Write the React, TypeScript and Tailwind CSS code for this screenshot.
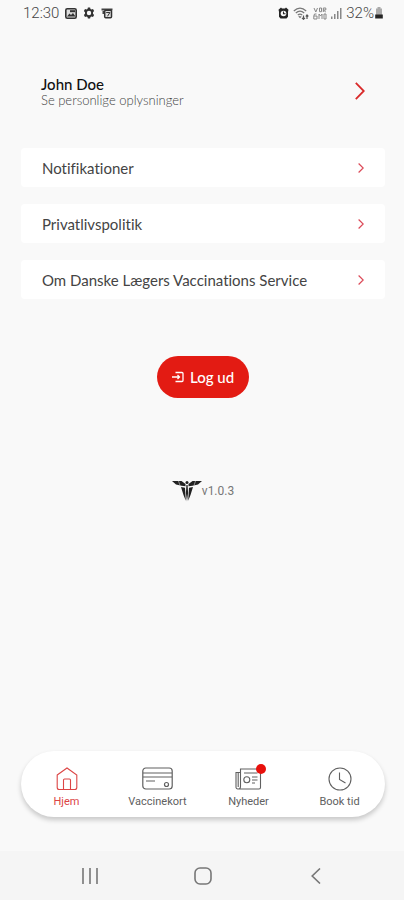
import React from "react";

const RED = "#d92a2a";

function Chevron({ large = false }: { large?: boolean }) {
  return large ? (
    <svg width="10" height="18" viewBox="0 0 10 18" fill="none" stroke={RED} strokeWidth="1.8" aria-hidden="true">
      <path d="M0.8 0.8 8.8 9 0.8 17.2" />
    </svg>
  ) : (
    <svg width="6" height="10" viewBox="0 0 6 10" fill="none" stroke="#dc4a58" strokeWidth="1.2" aria-hidden="true">
      <path d="M0.6 0.5 5.2 5 0.6 9.5" />
    </svg>
  );
}

function StatusBar() {
  return (
    <header className="flex h-[26px] items-center justify-between pl-[23px] pr-5 font-['Roboto',sans-serif] text-[15px] leading-5 text-[#666]">
      <div className="flex items-center gap-[6px]">
        <span className="font-light text-[#444]">12:30</span>
        <svg width="12" height="11" viewBox="0 0 12 11" aria-label="Billede">
          <rect x="0.8" y="0.8" width="10.4" height="9.4" rx="1.5" fill="#ddd" stroke="#333" strokeWidth="1.6" />
          <path d="M2 8.5 4.5 5.5 6 7 8 5l2.5 3.5z" fill="#333" />
          <path d="M5 2.2h5v2H5z" fill="#333" />
        </svg>
        <svg width="12" height="12" viewBox="0 0 12 12" aria-label="Indstillinger">
          <path d="M4.9 0.5h2.2l.4 1.5 1 .6 1.5-.5 1.1 1.9L10 5.2v1.6l1.1 1.2L10 9.9l-1.5-.5-1 .6-.4 1.5H4.9L4.5 10l-1-.6-1.5.5L.9 8 2 6.8V5.2L.9 4 2 2.1l1.5.5 1-.6z" fill="#333" />
          <circle cx="6" cy="6" r="2.2" fill="#fafafa" />
        </svg>
        <svg width="12" height="11" viewBox="0 0 12 11" aria-label="Kalender">
          <path d="M0.5 0.5h11v2h-11zM1.5 3h2v3h-2z" fill="#444" />
          <rect x="3.7" y="2.2" width="6.8" height="7.6" rx="1" fill="#ddd" stroke="#333" strokeWidth="1.5" />
          <path d="M5.2 4.5h3.7L6.5 8.3" fill="none" stroke="#333" />
        </svg>
      </div>
      <div className="flex items-center gap-1">
        <svg width="11" height="12" viewBox="0 0 11 12" aria-label="Alarm">
          <path d="M0.5 2.7 3 .5l1 1h3l1-1 2.5 2.2-.5 2v5L8.5 11.5h-6L1 9.7v-5z" fill="#252525" />
          <circle cx="5.5" cy="6.5" r="2.8" fill="#fafafa" />
          <path d="M5.5 4.5v2.2h2" fill="none" stroke="#252525" strokeWidth="1.1" />
        </svg>
        <svg width="16" height="13" viewBox="0 0 16 13" fill="none" stroke="#777" strokeWidth="1.2" aria-label="Wi-Fi">
          <path d="M0.8 4Q7 -1.8 13.2 4M2.8 6Q7 2.3 11.2 6M4.8 8Q7 6.2 9.2 8M5.8 9.2 7 10.5l1.2-1.2" />
          <path d="M10.5 8.5v3.5M9 10.8l1.5 1.5 1.5-1.5M14 12V8M12.8 9.5 14 8l1.3 1.5" stroke="#555" />
        </svg>
        <svg width="14" height="13" viewBox="0 0 14 13" fill="none" stroke="#888" strokeWidth="1" aria-label="VoLTE">
          <path d="M1 1l1.8 4L4.5 1M6.5 1h2v3.7h-2zM10.3 5V1h2.5v2h-2.5l2.5 2M3.5 7h-2L.8 9v3H4V9H1M6 12V7l1.5 2L9 7v5M11 12V7h2v5z" />
        </svg>
        <svg width="11" height="12" viewBox="0 0 11 12" fill="#888" aria-label="Signal">
          <path d="M0 9.5h1.5V12H0zM3 7h1.5v5H3zM6 4h1.5v8H6zM9 1h1.5v11H9z" />
        </svg>
        <div className="flex items-center">
          <span className="font-light text-[#444]">32%</span>
          <svg width="10" height="12" viewBox="0 0 10 12" aria-label="Batteri">
            <path d="M3.5 0h3v1.500H8V8H2V1.500h1.500z" fill="#aaa" />
            <path d="M1.200 7.500h7.600v4H1.200z" fill="#252525" />
          </svg>
        </div>
      </div>
    </header>
  );
}

const settings = ["Notifikationer", "Privatlivspolitik", "Om Danske Lægers Vaccinations Service"];

const tabs = [
  {
    label: "Hjem",
    active: true,
    icon: (
      <svg width="22" height="24" viewBox="0 0 22 24" fill="none" stroke="currentColor" strokeWidth="1.1">
        <path d="M1.2 8 11 1l9.800 7V20.500a2 2 0 0 1-2 2H3.200a2 2 0 0 1-2-2zM7.500 22.500V13a1 1 0 0 1 1-1h5a1 1 0 0 1 1 1v9.500" />
      </svg>
    ),
  },
  {
    label: "Vaccinekort",
    icon: (
      <svg width="31" height="24" viewBox="0 0 31 24" fill="none" stroke="currentColor" strokeWidth="1.2">
        <rect x="0.8" y="1" width="29.4" height="21" rx="3" />
        <path d="M1 6h29M1 10h29M4 14h9" />
        <circle cx="24.5" cy="17.5" r="2" />
      </svg>
    ),
  },
  {
    label: "Nyheder",
    badge: true,
    icon: (
      <svg width="27" height="24" viewBox="0 0 27 24" fill="none" stroke="currentColor" strokeWidth="1.1">
        <path d="M5.500 19.500V2h20v18.500A1.500 1.500 0 0 1 24 22H3a1.800 1.800 0 0 1-2-2V5.500h4.500M3.200 5.500V20M5.500 19.500c0 1.600-.500 2.500-2 2.500M9 6h13.500M17 10h5.500M17 13h5.500M17 16h3" />
        <circle cx="11.8" cy="12.8" r="3" />
      </svg>
    ),
  },
  {
    label: "Book tid",
    icon: (
      <svg width="24" height="24" viewBox="0 0 24 24" fill="none" stroke="currentColor" strokeWidth="1.1">
        <circle cx="12" cy="12" r="11" />
        <path d="M11.5 5.500v7l6 3.500" />
      </svg>
    ),
  },
];

export default function App() {
  return (
    <div className="flex min-h-screen flex-col bg-[#f9f9f9] font-['Lato',sans-serif] text-[#444]">
      <StatusBar />
      <main className="flex flex-1 flex-col pl-[21px] pr-[19px] pt-10">
        <button type="button" className="flex h-[50px] items-center justify-between px-5 text-left">
          <span className="flex flex-col pt-px">
            <span className="text-[15px] font-medium leading-[17px] text-[#111]">John Doe</span>
            <span className="text-[13px] font-light leading-[15px] text-[#444]">Se personlige oplysninger</span>
          </span>
          <Chevron large />
        </button>
        <ul className="mt-8 flex flex-col gap-[17px]">
          {settings.map((label) => (
            <li key={label}>
              <button type="button" className="flex h-[39px] w-full items-center justify-between rounded-[4px] bg-white px-[21px] text-[15px] leading-5 [font-variant-ligatures:none]">
                <span>{label}</span>
                <Chevron />
              </button>
            </li>
          ))}
        </ul>
        <button type="button" className="mt-[57px] flex h-[42px] items-center gap-[6px] self-center rounded-full bg-[#e31b13] px-[15px] text-[15px] font-medium leading-5 text-white">
          <svg width="12" height="12" viewBox="0 0 12 12" fill="none" stroke="currentColor" strokeWidth="1.3" aria-hidden="true">
            <path d="M3.500 1.500H10a1 1 0 0 1 1 1v7a1 1 0 0 1-1 1H3.500M0 6h7.500M5.500 4 7.500 6l-2 2" />
          </svg>
          Log ud
        </button>
        <div className="mt-[81px] flex items-center justify-center font-['Roboto',sans-serif] text-[12px] leading-6 text-[#777]">
          <svg width="30" height="22" viewBox="0 0 30 22" fill="#222" aria-label="Danske Lægers Vaccinations Service">
            <path d="M0 1h9.500l4 3v2.200L9.500 5.800 4 4.500zM30 1h-9.500l-4 3v2.200l4-.4L26 4.500z" />
            <circle cx="15" cy="2.500" r="1.500" />
            <path d="M9 7l4 .800.800 13L11.500 15zM21 7l-4 .800-.8 13 2.300-5.800zM14.400 5h1.200l.500 8L15 21.500 13.900 13z" />
            <path d="M6.500 1 8 5.500" stroke="#f9f9f9" strokeWidth="0.500" />
            <path d="M23.500 1 22 5.500" stroke="#f9f9f9" strokeWidth="0.500" />
          </svg>
          <span>v1.0.3</span>
        </div>
      </main>
      <nav aria-label="Hovedmenu" className="mb-[34px] ml-[21px] mr-[19px] grid h-[66px] grid-cols-4 rounded-full bg-white font-['Roboto',sans-serif] shadow-[0_3px_5px_rgba(0,0,0,0.2)]">
        {tabs.map(({ label, active, badge, icon }) => (
          <button
            key={label}
            type="button"
            aria-current={active ? "page" : undefined}
            className={`flex flex-col items-center justify-center gap-1 pt-2 text-[11px] leading-[14px] ${active ? "text-[#dc4545]" : "text-[#606060]"}`}
          >
            <span className="relative block">
              <span className="block">{icon}</span>
              {badge && <span className="absolute -right-1 -top-[3px] size-[10px] rounded-full bg-[#e8100c]" />}
            </span>
            {label}
          </button>
        ))}
      </nav>
      <footer className="grid h-[49px] grid-cols-3 items-center bg-[#f5f5f5] pl-[34px] pr-8 text-[#777]">
        <button type="button" aria-label="Seneste apps" className="justify-self-center">
          <svg width="16" height="16" viewBox="0 0 16 16" fill="none" stroke="currentColor" strokeWidth="1.6">
            <path d="M1 0v16M8 0v16M15 0v16" />
          </svg>
        </button>
        <button type="button" aria-label="Startskærm" className="justify-self-center">
          <svg width="18" height="18" viewBox="0 0 18 18" fill="none" stroke="currentColor" strokeWidth="1.6">
            <rect x="1" y="1" width="16" height="16" rx="5" />
          </svg>
        </button>
        <button type="button" aria-label="Tilbage" className="justify-self-center">
          <svg width="10" height="16" viewBox="0 0 10 16" fill="none" stroke="currentColor" strokeWidth="1.6">
            <path d="M9 0.5 1.2 8 9 15.5" />
          </svg>
        </button>
      </footer>
    </div>
  );
}
